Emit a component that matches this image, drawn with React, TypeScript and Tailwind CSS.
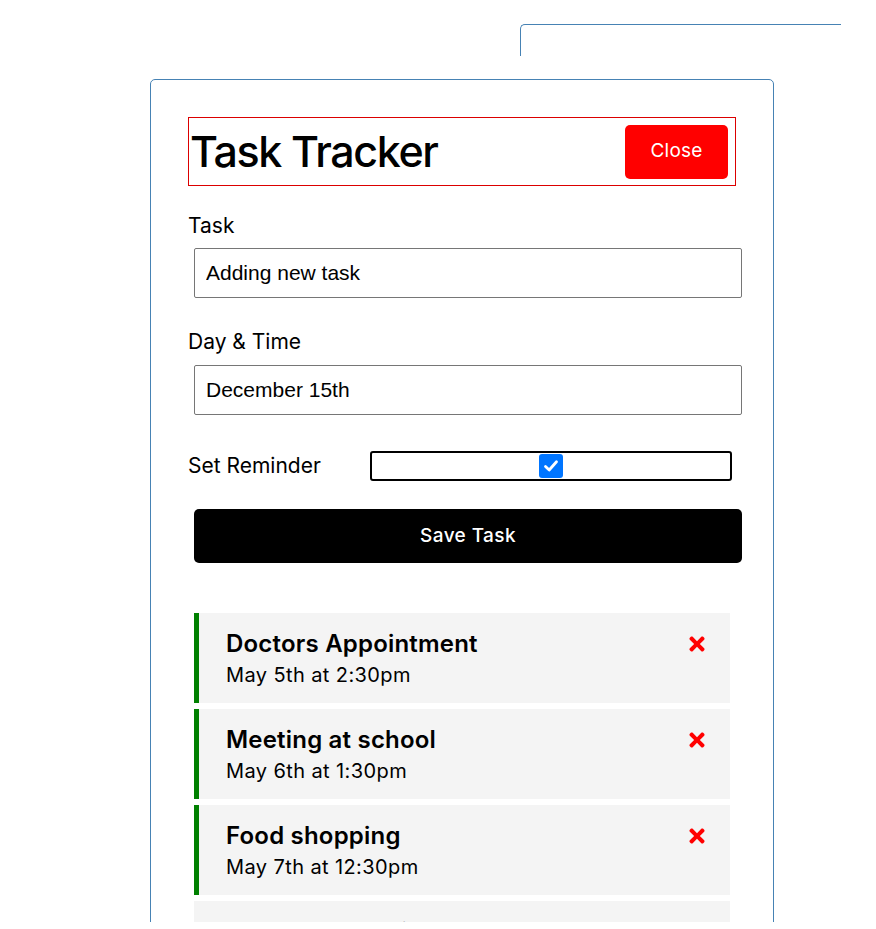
import React from "react";
import { FaTimes } from "react-icons/fa";

const tasks = [
  { text: "Doctors Appointment", day: "May 5th at 2:30pm", reminder: true },
  { text: "Meeting at school", day: "May 6th at 1:30pm", reminder: true },
  { text: "Food shopping", day: "May 7th at 12:30pm", reminder: true },
  { text: "Grocery shopping", day: "May 8th at 10:30am", reminder: false },
];

export default function App() {
  return (
    <div className="h-[922px] overflow-hidden bg-white text-black font-['Inter','Noto_Sans',sans-serif]">
      <div className="ml-[520px] mt-[24px] h-[32px] w-[321px] rounded-tl-[5px] border-l border-t border-[#4682b4]" />
      <div className="ml-[150px] mt-[23px] w-[624px] min-h-[900px] rounded-[5px] border border-[#4682b4] px-[37px] pt-[37px]">
        <div className="flex h-[69px] items-center justify-between border border-[#dc0000]">
          <h1 className="pl-[1px] text-[43px] font-medium leading-none tracking-[-1.4px]">Task Tracker</h1>
          <button className="mr-[7px] h-[54px] w-[103px] rounded-[5px] bg-[#ff0000] text-[19px] tracking-[0.2px] text-white">
            Close
          </button>
        </div>

        <div className="mt-[26px]">
          <label className="block text-[21px] leading-[28px]">Task</label>
          <input
            readOnly
            value="Adding new task"
            className="ml-[6px] mt-[8px] block h-[50px] w-[548px] rounded-[2px] border border-[#767676] px-[11px] text-[21px] font-['Liberation_Sans',Arial,sans-serif] outline-none"
          />
        </div>

        <div className="mt-[30px]">
          <label className="block text-[21px] leading-[28px]">Day &amp; Time</label>
          <input
            readOnly
            value="December 15th"
            className="ml-[6px] mt-[9px] block h-[50px] w-[548px] rounded-[2px] border border-[#767676] px-[11px] text-[21px] font-['Liberation_Sans',Arial,sans-serif] outline-none"
          />
        </div>

        <div className="mt-[36px] flex h-[30px] items-center">
          <label className="w-[182px] shrink-0 text-[21px] leading-[28px]">Set Reminder</label>
          <div className="flex h-[30px] w-[362px] items-center justify-center rounded-[3px] border-2 border-black">
            <span className="flex h-[24px] w-[24px] items-center justify-center rounded-[3px] bg-[#0075ff]">
              <svg width="18" height="18" viewBox="0 0 18 18">
                <path d="M3.5 9.5 L7.2 13 L14.5 4.8" fill="none" stroke="white" strokeWidth="2.8" strokeLinecap="round" strokeLinejoin="round" />
              </svg>
            </span>
          </div>
        </div>

        <button className="ml-[6px] mt-[28px] block h-[54px] w-[548px] rounded-[5px] bg-black text-[19px] font-medium tracking-[0.4px] text-white">
          Save Task
        </button>

        <div className="mt-[50px] flex flex-col gap-[6px] px-[6px]">
          {tasks.map((t) => (
            <div
              key={t.text}
              className={`h-[90px] shrink-0 bg-[#f4f4f4] pr-[25px] pt-[15px] ${
                t.reminder ? "border-l-[5px] border-[#008000] pl-[27px]" : "pl-[32px]"
              }`}
            >
              <div className="flex h-[32px] items-center justify-between">
                <h3 className="text-[24px] font-semibold leading-[32px] tracking-[0.2px]">{t.text}</h3>
                <FaTimes className="h-[22px] w-[16px] text-[#ff0000]" />
              </div>
              <p className="mt-[1px] text-[20px] leading-[28px] tracking-[0.4px]">{t.day}</p>
            </div>
          ))}
        </div>
      </div>
    </div>
  );
}
